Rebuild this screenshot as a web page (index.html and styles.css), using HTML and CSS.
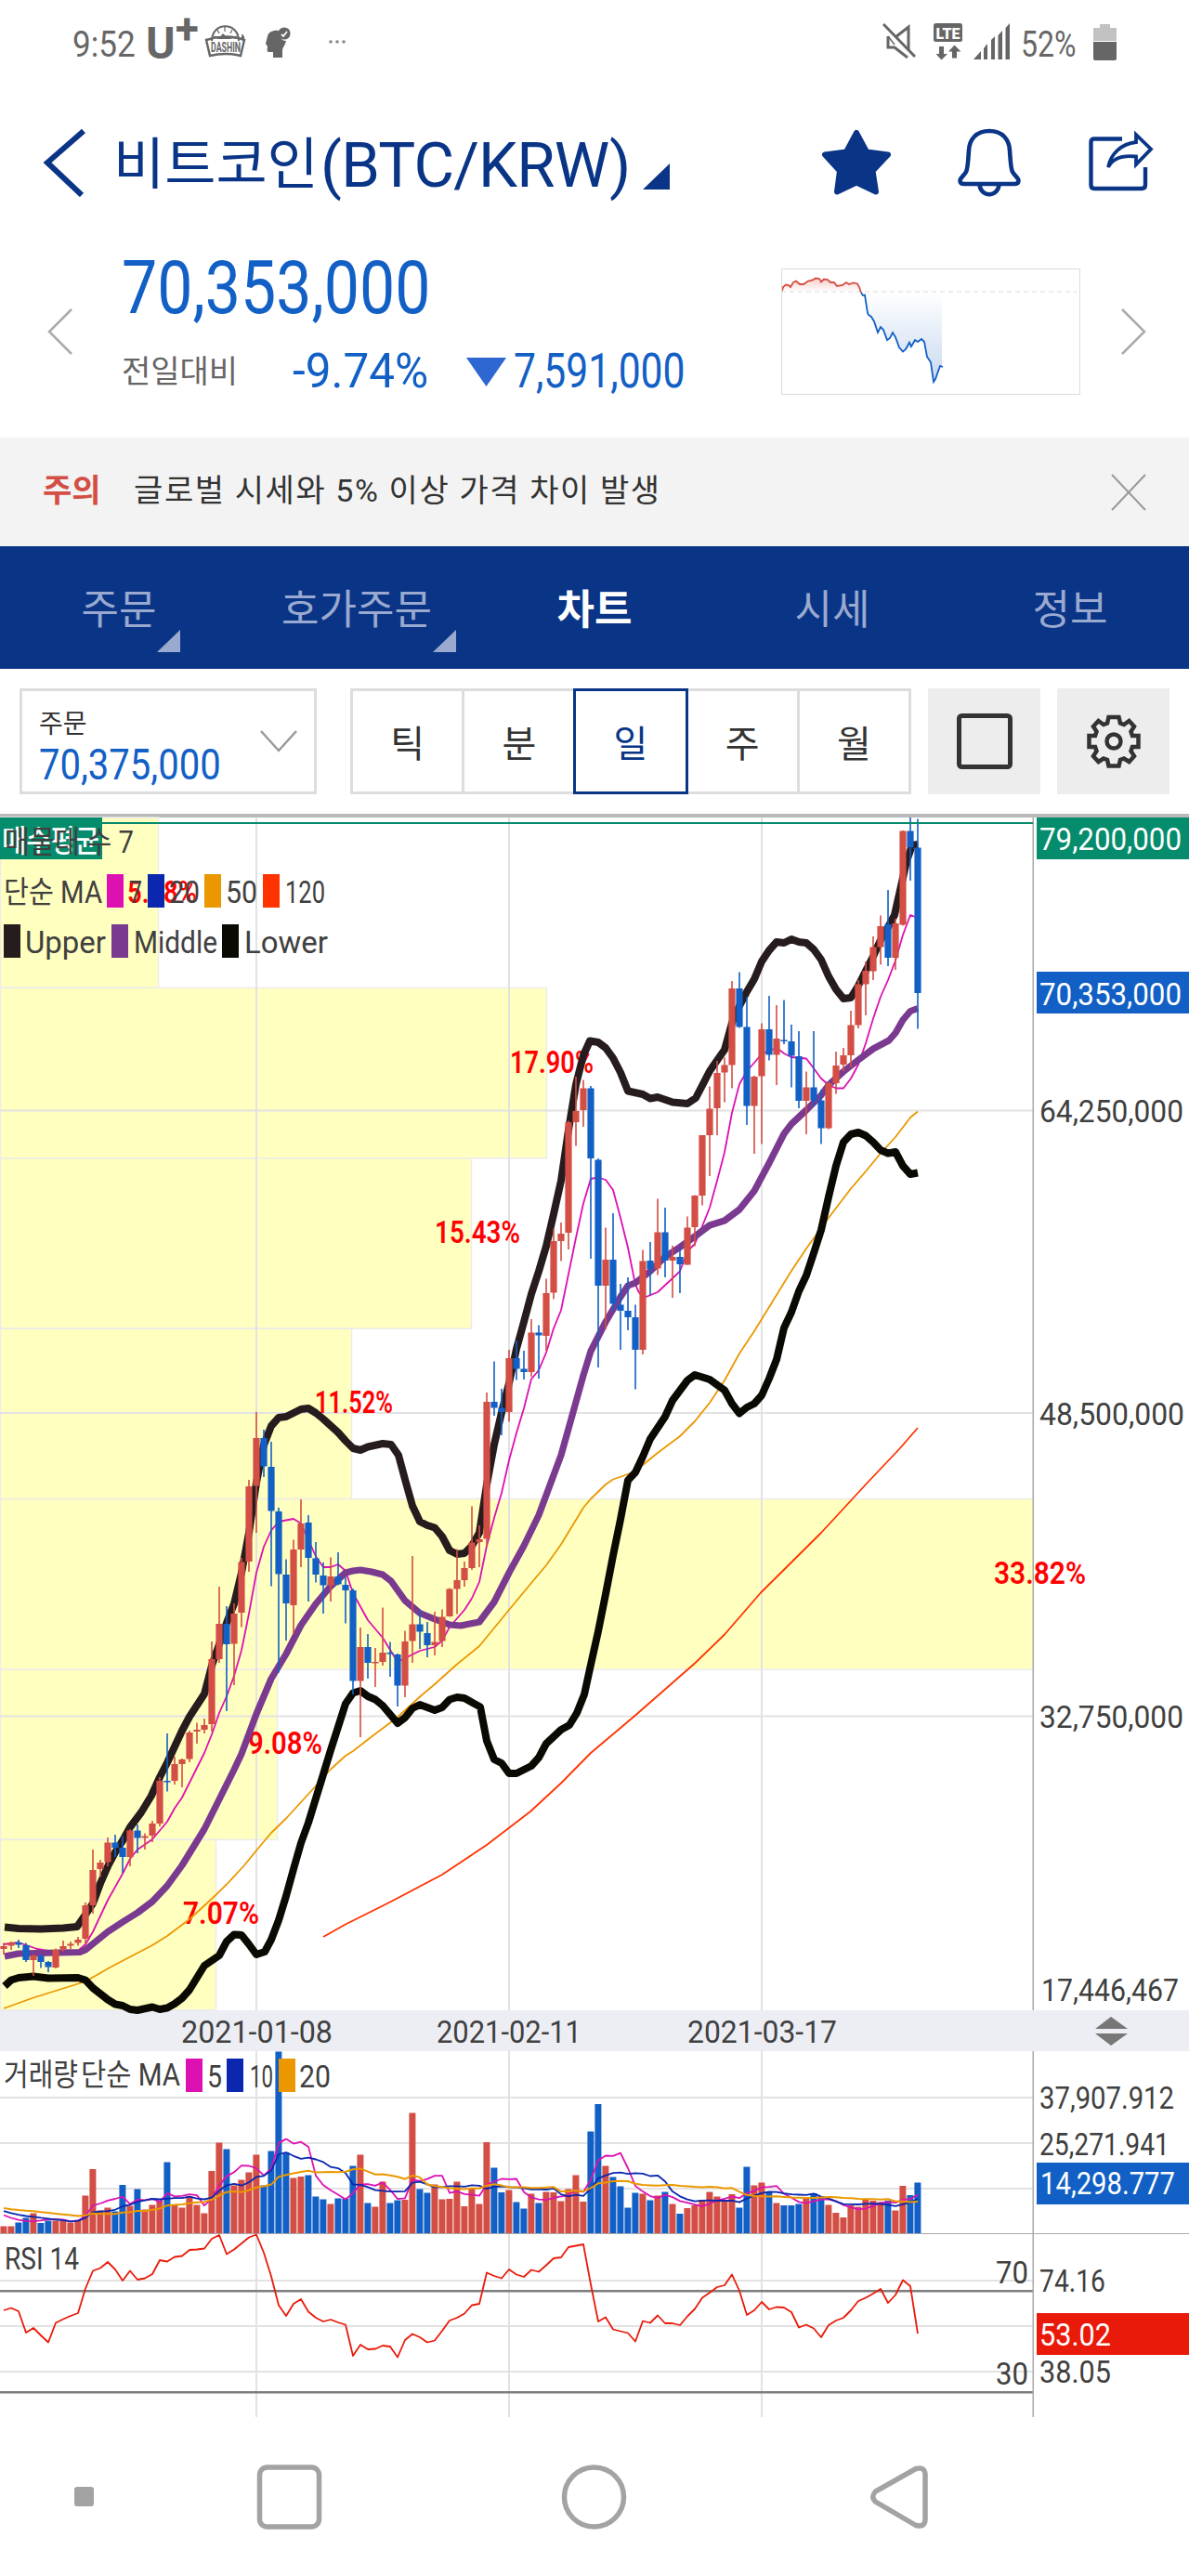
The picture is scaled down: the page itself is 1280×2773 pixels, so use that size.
FILE: index.html
```html
<!DOCTYPE html>
<html lang="ko">

<head>
  <meta charset="UTF-8">
  <title>비트코인(BTC/KRW)</title>
  <link rel="stylesheet" href="styles.css">
</head>

<body>
  <div class="status">
    <span class="clock"><span class="fit">9:52</span></span>
    <span class="carrier">U<sup>+</sup></span>
    <svg class="app-icon" width="44" height="36" viewBox="0 0 44 36" fill="none" stroke="#666">
      <path d="M7 17C7 -4 36 -4 36 17" stroke-width="2" />
      <path d="M21 2v5M13 5l2 4M29 5l-2 4M9 12l4 1M34 12l-4 1" stroke-width="1.2" />
      <path d="M11 15l5-2 3-4 4 4 7 2z" fill="#666" stroke="none" />
      <path d="M1 16Q22 9 42 16L38 33Q22 29 5 33Z" stroke-width="2.4" />
      <path d="M40 10l2 4-3 2z" fill="#666" />
      <text x="6" y="29" textLength="32" lengthAdjust="spacingAndGlyphs" class="dashin">DASHIN</text>
    </svg>
    <svg class="head-icon" width="27" height="34" viewBox="0 0 27 34">
      <path d="M2 10C3 5 9 3 14 4C13 10 17 15 22 15C21 20 18 22 18 26V33H8V27H3Q1 27 2 21L0 18Z" fill="#666" />
      <circle cx="20" cy="7" r="6.6" fill="#666" />
      <path d="M17 8l2 2 4-5" fill="none" stroke="#fff" stroke-width="1.8" />
    </svg>
    <svg class="dots" width="20" height="6" viewBox="0 0 20 6" fill="#888">
      <circle cx="3" cy="3" r="1.8" /><circle cx="10" cy="3" r="1.8" /><circle cx="17" cy="3" r="1.8" />
    </svg>
    <svg class="mute" width="38" height="38" viewBox="0 0 38 38" fill="none" stroke="#666" stroke-width="3">
      <path d="M1 1L35 36" />
      <path d="M14 15L28 4V29M6 14V26H13L27 37" />
      <path d="M6 14L13 23" stroke-width="1.5" />
    </svg>
    <svg class="lte" width="32" height="40" viewBox="0 0 32 40">
      <rect width="31" height="20" rx="2.5" fill="#666" />
      <text x="2.5" y="16.5" textLength="26" lengthAdjust="spacingAndGlyphs" class="lte-text">LTE</text>
      <path d="M6 25h5v8h4l-6.500 6.500L2.500 33H6zM20 37.500h5v-7h4.500L22.500 23.500 16 30.500h4z" fill="#666" />
    </svg>
    <svg class="signal" width="40" height="40" viewBox="0 0 40 40" fill="#666">
      <path d="M0 39L8 30V39ZM11 39V27L15 22V39ZM19 39V18L23 14V39ZM26.500 39V13L31 8V39ZM34.500 39V5L39 0V39Z" />
    </svg>
    <span class="percent"><span class="fit">52%</span></span>
    <svg class="battery" width="25" height="40" viewBox="0 0 25 40">
      <path d="M0 18V4H7V0H18V4H25V18Z" fill="#c2c2c2" />
      <path d="M0 19H25V37Q25 39 23 39H2Q0 39 0 37Z" fill="#666" />
    </svg>
  </div>

  <header class="title-bar">
    <svg class="back" width="48" height="74" viewBox="0 0 48 74" fill="none" stroke="#0a3587" stroke-width="6">
      <path d="M44 3L5 37L42 72" />
    </svg>
    <h1><span class="ko">비트코인</span><span class="pair">(BTC/KRW)</span></h1>
    <svg class="corner" width="29" height="28" viewBox="0 0 29 28"><path d="M0 28L29 0V28Z" fill="#0a3587" /></svg>
    <svg class="star" width="76" height="74" viewBox="0 0 76 74">
      <path d="M38 5L49 25.500L72 28.500L55.500 46L59 68.500L38 58.500L17 68.500L20 46L4 28.500L27 25.500Z" fill="#0a3587" stroke="#0a3587"
        stroke-width="6" stroke-linejoin="round" />
    </svg>
    <svg class="bell" width="68" height="74" viewBox="0 0 68 74" fill="none" stroke="#0a3587" stroke-width="4.600">
      <path d="M34 3C20 3 12.500 12 12 24C11 37 11 43 9 47C7 51 3 53 2.500 56C2.500 59 4 60 7 60H61C64 60 65.500 59 65.500 56C65 53 61 51 59 47C57 43 57 37 56 24C55.500 12 48 3 34 3Z" />
      <path d="M23.500 60C24 75 44 75 44.500 60" />
    </svg>
    <svg class="share" width="72" height="74" viewBox="0 0 72 74" fill="none" stroke="#0a3587" stroke-width="4.400">
      <path d="M37 11.500H7Q3.500 11.500 3.500 15V61Q3.500 65 7 65H58Q62 65 62 61V42" />
      <path d="M22 42C26 34 34 28.500 52 30.500V39L68 22.500L52 7V15C36 17 25 27 22 42Z" stroke-width="3.800" />
    </svg>
  </header>

  <section class="quote">
    <svg class="prev" width="28" height="50" viewBox="0 0 28 50" fill="none" stroke="#aaa" stroke-width="2.500"><path d="M26 1L2 25L26 49" /></svg>
    <div class="quote-main">
      <div class="price"><span class="fit">70,353,000</span></div>
      <div class="change">
        <span class="label">전일대비</span>
        <span class="rate"><span class="fit">-9.74%</span></span>
        <svg width="43" height="31" viewBox="0 0 43 31"><path d="M0 0H43L21.500 31Z" fill="#2e67d1" /></svg>
        <span class="diff"><span class="fit">7,591,000</span></span>
      </div>
    </div>
    <svg class="mini" width="322" height="136" viewBox="0 0 322 136" fill="none">
      <defs>
        <linearGradient id="down" x1="0" y1="0" x2="0" y2="1"><stop offset="0" stop-color="#fff" /><stop offset="1" stop-color="#c8d9ef" /></linearGradient>
        <linearGradient id="up" x1="0" y1="0" x2="0" y2="1"><stop offset="0" stop-color="#f6cdca" /><stop offset="1" stop-color="#fff" /></linearGradient>
      </defs>
      <path d="M1 24L2 20L5 17.500L10 20L16 13.500L24 17L29 13.500L37 10.500L43 14.500L46 11.500L53 15L57 15L60 19L70 15L82 16.500L86 25Z" fill="url(#up)" />
      <path d="M86 25H173V106L171 105L164 122L161 101L157 95L154 79L151 76L140 84L131 89.500L127 85L120 69L114 77L107 63L104 69L97 52L93 48L90 28Z" fill="url(#down)" />
      <path d="M0 25H318" stroke="#e6e6e6" stroke-width="1.500" stroke-dasharray="5 4" />
      <path d="M1 24L2 20L5 17.500L8 18L10 20L13 15L16 13.500L20 17L24 17L29 13.500L34 12.500L37 10.500L41 11L43 14.500L46 11.500L50 12L53 15L57 15L60 19L66 18L70 15L73 17L78 15.500L82 16.500L84 20L86 26" stroke="#d34e44" stroke-width="1.800" />
      <path d="M86 26L88 29L90 28.500L93 48L94 50L97 52L100 57L104 69L107 63L110 66L114 77L117 75L120 69L123 74L127 85L131 89.500L134 87L138 79.500L140 84L144 77L147 79L151 76L154 79L157 95L161 101L164 122L166 119L171 105L174 106" stroke="#1260c5" stroke-width="1.800" />
      <rect x=".5" y=".5" width="321" height="135" stroke="#dcdcdc" />
    </svg>
    <svg class="next" width="28" height="50" viewBox="0 0 28 50" fill="none" stroke="#aaa" stroke-width="2.500"><path d="M2 1L26 25L2 49" /></svg>
  </section>

  <div class="alert">
    <strong>주의</strong>
    <span class="alert-text">글로벌 시세와 5% 이상 가격 차이 발생</span>
    <svg width="38" height="40" viewBox="0 0 38 40" stroke="#999" stroke-width="2"><path d="M1 1L37 39M37 1L1 39" /></svg>
  </div>

  <nav class="tabs">
    <a class="tab has-menu">주문</a>
    <a class="tab has-menu wide">호가주문</a>
    <a class="tab active">차트</a>
    <a class="tab">시세</a>
    <a class="tab">정보</a>
  </nav>

  <div class="toolbar">
    <div class="order-box">
      <div>
        <div class="order-label">주문</div>
        <div class="order-price"><span class="fit">70,375,000</span></div>
      </div>
      <svg width="40" height="24" viewBox="0 0 40 24" fill="none" stroke="#999" stroke-width="2.500"><path d="M1 1L20 22L39 1" /></svg>
    </div>
    <div class="periods">
      <button>틱</button>
      <button>분</button>
      <button class="on">일</button>
      <button>주</button>
      <button>월</button>
    </div>
    <div class="tool">
      <svg width="60" height="60" viewBox="0 0 60 60"><rect x="2.500" y="2.500" width="55" height="55" rx="3" fill="none" stroke="#333" stroke-width="5" /></svg>
    </div>
    <div class="tool gear">
      <svg width="60" height="60" viewBox="0 0 60 60" fill="none" stroke="#333" stroke-width="4.500">
        <path d="M24.500 4H35.500L37 10.500L41 12L46.500 8L52 14L48.500 19.500L50 24H56.500V36H50L48.500 40.500L52 46L46.500 52L41 48.500L37 50L35.500 56.500H24.500L23 50L19 48.500L13.500 52L8 46L11.500 40.500L10 36H3.500V24H10L11.500 19.500L8 14L13.500 8L19 12L23 10.500Z" />
        <circle cx="30" cy="30" r="7.500" />
      </svg>
    </div>
  </div>

  <main class="charts">
    <svg id="price-chart" width="1280" height="1284" viewBox="0 0 1280 1284"></svg>
    <svg id="date-axis" width="1280" height="44" viewBox="0 0 1280 44"></svg>
    <svg id="volume-chart" width="1280" height="197" viewBox="0 0 1280 197"></svg>
    <svg id="rsi-chart" width="1280" height="197" viewBox="0 0 1280 197"></svg>
  </main>

  <footer class="system-nav">
    <svg width="1280" height="171" viewBox="0 0 1280 171" fill="none" stroke="#a3a3a3" stroke-width="5.500">
      <rect x="80" y="75" width="21" height="21" rx="3" fill="#a3a3a3" stroke="none" />
      <rect x="279.500" y="54" width="64" height="64" rx="8" />
      <circle cx="639.500" cy="86" r="32" />
      <path d="M986 55.500L942.500 80Q937 86 942.500 91L986 116.500Q996 119 996 110V61Q995 53 986 55.500Z" />
    </svg>
  </footer>

  <script src="chart.js"></script>
</body>

</html>
```

FILE: styles.css
```css
* {
  box-sizing: border-box;
}

body {
  margin: 0;
  width: 1280px;
  font-family: Roboto, "Noto Sans CJK KR", sans-serif;
  background: #fff;
  color: #333;
}

svg {
  display: block;
  flex: none;
}

.fit {
  display: inline-block;
  transform-origin: 0 50%;
  white-space: nowrap;
}

/* status bar */
.status {
  display: flex;
  height: 100px;
  padding: 0 78px 0 78px;
  color: #666;
}

.clock,
.percent {
  font-size: 39px;
  line-height: 96px;
  width: 79px;
}

.clock .fit {
  transform: scaleX(.9);
}

.carrier {
  width: 64px;
  font-size: 48px;
  font-weight: 700;
  line-height: 94px;
  white-space: nowrap;
}

.carrier sup {
  font-size: 46px;
  line-height: 0;
  vertical-align: 16px;
}

.app-icon {
  margin-top: 27px;
  overflow: visible;
}

.dashin {
  font: 700 15px Roboto, sans-serif;
  fill: #666;
  stroke: none;
}

.head-icon {
  margin: 29px 0 0 21px;
}

.dots {
  margin: 42px auto 0 40px;
}

.mute {
  margin-top: 25px;
}

.lte {
  margin: 25px 0 0 17px;
}

.lte-text {
  font: 900 17px Roboto, sans-serif;
  fill: #fff;
}

.signal {
  margin: 25px 0 0 11px;
}

.percent {
  width: 79px;
  margin-left: 11px;
}

.percent .fit {
  transform: scaleX(.82);
}

.battery {
  margin: 26px 0 0 -1px;
}

/* title */
.title-bar {
  display: flex;
  height: 150px;
  padding: 38px 37px 0 46px;
}

h1 {
  display: flex;
  width: 605px;
  margin: 0 0 0 28px;
  line-height: 80px;
  font-weight: 400;
  color: #0a3587;
  white-space: nowrap;
}

h1 .ko {
  width: 223px;
  font-size: 60px;
}

h1 .pair {
  font-size: 67px;
  letter-spacing: -.8px;
}

.corner {
  margin: 38px 0 0 -31px;
}

.star {
  margin-left: 163px;
}

.bell {
  margin-left: 71px;
}

.share {
  margin-left: 72px;
}

/* quote */
.quote {
  display: flex;
  height: 221px;
  padding-left: 51px;
}

.prev,
.next {
  margin-top: 82px;
}

.quote-main {
  width: 710px;
  padding: 20px 0 0 52px;
  color: #1260c5;
}

.price {
  font-size: 80px;
  line-height: 80px;
}

.price .fit {
  transform: scaleX(.85);
}

.change {
  display: flex;
  align-items: center;
  height: 62px;
  margin-top: 19px;
  font-size: 52px;
  line-height: 62px;
}

.label {
  width: 184px;
  font-size: 34px;
  color: #666;
}

.rate {
  width: 187px;
}

.rate .fit {
  transform: scaleX(.95);
}

.diff {
  padding-left: 8px;
}

.diff .fit {
  transform: scaleX(.82);
}

.mini {
  margin: 39px 0 0 52px;
}

.next {
  margin-left: 43px;
}

/* alert */
.alert {
  display: flex;
  align-items: center;
  height: 117px;
  padding: 0 46px;
  background: #f3f3f3;
  font-size: 34px;
}

.alert strong {
  width: 98px;
  color: #d34e44;
}

.alert-text {
  flex: 1;
  font-size: 34px;
  letter-spacing: 1.6px;
}

.alert strong,
.alert-text {
  line-height: 40px;
  margin-top: -3px;
}

/* tabs */
.tabs {
  display: flex;
  height: 132px;
  background: #0a3587;
}

.tab {
  position: relative;
  flex: 1;
  font-size: 44px;
  line-height: 139px;
  text-align: center;
  color: #9aa9cf;
}

.tab.active {
  font-weight: 700;
  color: #fff;
}

.has-menu::after {
  content: "";
  position: absolute;
  left: 169px;
  top: 90px;
  border-left: 25px solid transparent;
  border-bottom: 24px solid #9aa9cf;
}

.has-menu.wide::after {
  left: 210px;
}

/* toolbar */
.toolbar {
  display: flex;
  height: 160px;
  padding: 21px 0 0 21px;
  border-bottom: 4px solid #b9b9b9;
}

.order-box {
  display: flex;
  justify-content: space-between;
  width: 320px;
  height: 114px;
  padding: 18px 18px 0 18px;
  border: 3px solid #ddd;
}

.order-box svg {
  margin-top: 24px;
}

.order-label {
  font-size: 28px;
  line-height: 36px;
}

.order-price {
  width: 200px;
  font-size: 46px;
  line-height: 50px;
  color: #1260c5;
}

.order-price .fit {
  transform: scaleX(.87);
}

.periods {
  display: flex;
  width: 604px;
  height: 114px;
  margin-left: 36px;
  border: 3px solid #ddd;
}

.periods button {
  flex: 1;
  padding: 0;
  border: 0;
  border-right: 3px solid #ddd;
  background: #fff;
  font: 400 40px Roboto, "Noto Sans CJK KR", sans-serif;
  color: #333;
}

.periods button:last-child {
  border-right: 0;
}

.periods .on {
  margin: -3px 0 -3px -3px;
  border: 3px solid #0a3587;
  color: #0a3587;
}

.tool {
  display: flex;
  align-items: center;
  justify-content: center;
  width: 121px;
  height: 114px;
  margin-left: 18px;
  background: #ededed;
}

.gear {
  margin-left: 18px;
}

/* charts */
.charts {
  font-size: 33px;
}

.charts svg {
  position: relative;
  overflow: visible;
}

#date-axis {
  z-index: 0;
}

#price-chart {
  z-index: 1;
}

.system-nav {
  height: 171px;
}
```

FILE: chart.js
```js
const NS = 'http://www.w3.org/2000/svg';
const STEP = 8;
const RED = '#d34e44';
const BLUE = '#1260c5';
const AXIS_X = 1112;

// [color, body top, body bottom, high, low]
const candles = [
  ['R',1215,1218,1211.5,1224],['R',1211,1214.5,1210,1219],['B',1211,1213.5,1208,1217],['B',1214,1230,1211.5,1232],
  ['R',1225,1230,1224,1247],['B',1225.5,1232,1224,1238.5],['B',1232,1237.5,1231,1243],['R',1219,1238,1217.5,1239],
  ['R',1215,1218.5,1209,1221],['R',1212.5,1214.5,1210,1218],['R',1208,1211.5,1205,1214.5],['R',1171,1207,1168,1213],
  ['R',1133,1171,1111,1180],['R',1125,1132,1122,1140.5],['R',1103.5,1124.5,1098,1129],['B',1103.5,1109,1095,1119],
  ['B',1109,1119,1096.5,1136],['R',1090.5,1119,1089,1129],['B',1090.5,1098.5,1084,1115],['R',1096.5,1098.5,1093.5,1111],
  ['R',1083,1096,1080,1103],['R',1037,1083,1033,1086],['B',1037,1038,986,1048.5],['R',1019,1037,1011,1041],
  ['R',1014,1019,1013,1044],['R',985,1013.5,983,1017],['R',982,984,974.5,997],['R',977,982,970,986],
  ['R',906,976,887,984],['R',868,906,828,910],['B',868,890,849,962],['R',857,889.5,846,934],
  ['R',801.5,856,797,871.5],['R',720,801,713,812],['R',668,719.5,640,770],['B',668,698.5,659,710],
  ['B',699,746.5,672,827.5],['B',747,814.5,743,920.5],['B',815,846,798.5,886],['R',788,848,777.5,879],
  ['R',760,788,734,807],['B',759,797,751,844],['B',797.5,815,780,823.5],['B',816,826.5,802,857],
  ['R',817,826.5,796.5,844],['B',817,825.5,791,826.5],['B',826,832,817.5,867.5],['B',832,929.5,830,944],
  ['R',893,929.5,872,990],['B',893,910,879,927],['R',909,910,894,936],['R',899,909,850.5,913],
  ['B',899,900.5,887.5,925],['B',901,934.5,900,957],['R',887,934.5,875.5,947],['R',868.5,886.5,795,910],
  ['B',868.5,876.5,853.5,895],['B',878,891,866,904],['R',887.5,891,855,902],['R',860.5,886.5,852.5,893],
  ['R',830.5,860,829.5,860.5],['R',821,830.5,787.5,857.5],['R',808,821,801,828],['R',780.5,808,741.5,810],
  ['R',777,780,762,807],['R',629,776.5,619,785],['B',629,635.5,585.5,644],['B',635.5,640,615,665],
  ['R',582,640,573,650.5],['B',582,593.5,563,605.5],['B',593.5,597,574,605],['R',554.5,597,540,602],
  ['B',554.5,557.5,546.5,604],['R',512,558,496.5,574],['R',456,511.5,442.5,518.5],['R',448,456,436,477.5],
  ['R',328,447,326.5,465],['R',316,328,279,353.5],['R',291.5,315,282.5,333],['B',291.5,367,289,475],
  ['B',368.5,504,367,592],['R',476,504,441.5,551],['B',476,523.5,426,531.5],['B',524.5,531,502,573],
  ['B',531,538,495,552],['B',538,573,524.5,615.5],['R',477.5,573,465.5,578],['B',477,486,457,514.5],
  ['R',446.5,485.5,410.5,492.5],['B',446.5,477,420,495],['R',473,477,461,517],['B',473,481,464,512],
  ['R',441.5,481.5,429.5,481.5],['R',407,441,406.5,461.5],['R',342,407,342,417.5],['R',313.5,342,289.5,386],
  ['R',275,313,262,342],['R',266.5,274.5,258.5,306.5],['R',184,266.5,176,291.5],['B',184,225.5,166.5,226.5],
  ['B',225.5,310.5,193.5,331],['R',279,310.5,278,362],['R',228,278.5,221.5,351.5],['B',228,255.5,192,261.5],
  ['R',238,255.5,202,288],['B',239.5,241,196.5,244],['B',241,256.5,223,290.5],['B',257,305,230,313],
  ['R',290.5,305,273.5,341],['B',290.5,304.5,230,311],['B',304.5,334.5,293,351.5],['R',286,334.5,285,335.5],
  ['R',267,286,252,297.5],['R',256,266,248,273.5],['R',223.5,256,208,269.5],['R',179.5,223.5,175,227],
  ['R',165,179.5,155,213],['R',139.5,165.5,128,175],['R',117,139.5,105.5,158.5],['B',115,151,78,160],
  ['R',114,151,109,164],['R',14.5,115.5,14,116.5],['B',14.5,32,0,68],['B',32.5,189,1.5,227.5]
];

const volumes = [
  8,8,12,17,22,11.5,14,14,14,12, 15,41,69.5,25,28,24,52.5,30,48,26,
  31,36,77,31,28,40,31,22,67.5,98, 91,52,58,66,85,52,89,196,87.5,60,
  61.5,63,40,37,32,38,38,73,85,33, 29,56,33,36,36.5,130,48,44,53,37,
  37.5,56,29.5,49,32,98.5,71,44.5,47,34, 27,43,33,45,44.5,35,48,63,34.5,110,
  139.5,73,61,51,28,44,43,36,41,45, 32,21.5,27.5,30.5,36.5,45,40,36,42.5,28,
  72,52,55,44.5,33,30.5,30.5,32,38.5,43.5, 40,31,22.5,17.5,30.5,29,36.5,35.5,34,35.5,
  25,51.5,41.5,55
];

const rsi = [
  82,79.5,83,106,101,109,116.5,95.5,91.5,88, 85,58.5,39.5,36.5,30,38,50,39.5,49,47.5,
  43,28,29.5,24.5,23.5,17,16.5,15.5,5,1, 21.5,16.5,10,3.5,.5,20,45.5,76.5,88,75,
  70,83.5,90,94,92,95,97.5,131,119,124, 123.5,120,121,132.5,114,107.5,111,116.5,114.5,104,
  93,90,85.5,76.5,75,41.5,45,47.5,38,43.5, 46,38.5,40.5,33.5,26,25,14,12.5,11,54,
  94,89.5,102.5,104.5,106.5,115.5,93.5,95.5,87.5,96, 96,98,88.5,80.5,68.5,63,57,55,43.5,61,
  87,82,73,81,78.5,79,84,100.5,97.5,101.5, 111,98,93,90,82,72,68.5,64,59,74,
  65.5,49.5,56,107
];

const ma120 = '348,1205 372,1191.5 420,1167.5 476,1138 524,1106 571,1070 604,1039.5 636,1007 684,966.5 748,910.5 780,879.5 819,834.5 884,770 932,718 968,680 988,657';
const ma50 = '4,1282 36,1270.5 60,1263 92,1253 120,1237 164,1214 180,1204 204,1186 228,1164 244,1148.5 263,1128 276,1112 292,1093 308,1077.5 324,1060 340,1042.5 356,1024.5 372,1010 380,1005 400,989.5 428,968.5 452,946.5 468,933 492,911.5 516,892 548,853 572,824 588,805 604,782.5 628,743 636,733.5 652,718 660,712.5 680,705.5 692,697 708,684 732,666 748,650 764,630 780,606 796,577 812,553 828,527 852,488 868,464 892,431 916,399.5 932,381 948,361.5 964,344 980,323 988,316.5';
const ma7 = '4,1213 20,1211 40,1218 60,1221.5 84,1220 92,1213 100,1199.5 116,1165.5 132,1137 140,1121 148,1111 164,1100 180,1081 188,1066.5 196,1055 220,1007 228,987 236,964 244,946 252,924 260,896.5 268,857 276,813 284,785 292,767.5 300,758 316,755 324,760 332,777.5 340,795.5 348,807 356,807 364,804 372,811 380,835 396,864 412,883 428,909 436,905 452,897 468,893 476,886 484,871.5 500,853 508,840.5 516,823 524,784 532,754 540,727 548,692 556,662.5 564,636 572,604.5 580,595 588,576 596,550 604,530.5 612,491.5 620,452.5 628,415.5 636,389 644,387.5 652,390 660,401 668,431 676,463 684,503 688,511.5 693,517 708,511 724,496 732,488.5 740,467 748,459 756,440 764,420 772,391 780,360.5 788,318 796,287 804,273 812,264 820,254.5 836,248 844,254 852,258 868,259.5 876,270 884,281 892,288 900,291.5 908,291.5 916,281 924,266 932,243 940,216.5 948,193 956,175 964,154 972,126.5 980,105 988,108';
const upper = '5,1194.5 20,1196 44,1196.5 68,1195.5 83,1194 92,1181 100,1169 108,1147.5 117,1127 124,1114 132,1101.5 140,1087 152,1071 163,1053 172,1033 180,1017.5 196,983 204,968 220,943.5 228,913 236,890 244,867 252,846.5 260,813 268,770 276,716 284,675.5 292,655 300,646 308,645 324,637 332,636 340,641 348,647.5 364,662 372,671 380,679 388,681 396,677.5 412,674 421,675 429,686.5 436,712.5 444,741 452,758 460,762 468,764.5 476,774 484,789 492,793 500,792 508,784 516,770 524,718 532,675 540,640.5 548,609 556,572 564,543 572,513 580,488.5 588,461.5 596,427 604,391 612,336.5 620,287.5 628,256 635,240.5 644,242 652,248 660,259 668,274.5 676,294.5 692,298 700,302.5 708,301 724,306.5 740,308 749,302 764,273 780,250 788,221 796,203 804,187.5 812,174 820,155 828,143 836,134 844,135 852,131 860,134 868,135 876,142 884,153 892,171 900,185 908,195 916,194 924,181 932,165 940,149.5 948,132 956,118 963,105 970,74 976,47 982,30 988,29';
const middle = '5,1226 20,1223 40,1222.5 86,1221.5 92,1219 116,1199.5 132,1189 148,1179 164,1167 180,1150 196,1128 220,1089 236,1057 252,1025 260,1008 276,965 292,927 308,900.5 324,869.5 340,846.5 356,827.5 372,813 380,811 388,810 400,812 412,815 421,822 436,843 452,856.5 468,863 484,869 496,870 516,866 532,844.5 548,813 564,784 580,751 604,686.5 612,658 628,600.5 636,574.5 652,543 668,516 676,504 684,501 700,488.5 716,473 732,462.5 748,451 764,439 780,434 796,422 812,402 828,372 844,340.5 852,330 868,315 884,299 892,288 908,273.5 924,261 940,249 957,240 964,232 972,218 980,208.5 988,205.5';
const lower = '5,1258 12,1251.5 20,1249 36,1247.5 52,1249.5 84,1249 92,1251.5 100,1260 116,1272.5 124,1277.5 132,1279 140,1283 148,1284 164,1280.5 172,1283 180,1281.5 188,1277 196,1271 204,1262 220,1236 236,1225 244,1210 252,1202.5 260,1203 268,1213 276,1224 285,1221 292,1208 300,1187 308,1161 316,1132 324,1104 332,1082 340,1056 356,1004 364,979 372,954 380,942.5 388,940 396,946 404,949.5 412,956 428,975 436,969 444,959 452,955 468,961 476,958 484,949.5 492,947 500,948 517,957.5 524,994 532,1014 540,1018 548,1029 556,1029 572,1021 580,1012 588,997 604,982 613,977 621,964 629,944 636,912 644,876 652,836 660,794.5 668,755.5 676,713.5 684,705 692,688 700,669 716,645 724,627.5 740,606 748,600 764,605 780,616.5 788,631 796,641.5 804,635 812,631 820,622 828,604 836,583.5 844,549.5 852,532.5 860,510 868,493 876,469 884,444 892,408.5 900,375 908,349.5 916,341 924,339 932,342.5 940,349.5 948,358 956,361.5 964,360 972,375 980,384 988,382.5';

function add(svg, name, attrs) {
  const el = document.createElementNS(NS, name);
  for (const key in attrs) el.setAttribute(key, attrs[key]);
  svg.appendChild(el);
  return el;
}

function rect(svg, x, y, width, height, fill) {
  return add(svg, 'rect', { x, y, width, height, fill });
}

function curve(svg, points, stroke, width) {
  add(svg, 'polyline', { points, fill: 'none', stroke, 'stroke-width': width, 'stroke-linejoin': 'round' });
}

function label(svg, text, x, y, width, fill = '#404040', weight = 400) {
  const el = add(svg, 'text', { x, y, fill, 'font-weight': weight, textLength: width, lengthAdjust: 'spacingAndGlyphs' });
  el.textContent = text;
}

function grid(svg, height, rows) {
  [276, 548, 820].forEach(x => rect(svg, x - 1, 0, 2, height, '#e2e2e2'));
  rows.forEach(y => rect(svg, 0, y - 1, AXIS_X, 2, '#e2e2e2'));
}

function legend(svg, items, y, height) {
  items.forEach(([color, x, text, tx, width]) => {
    rect(svg, x, y, 18, height, color);
    label(svg, text, tx, y + height - 5, width);
  });
}

function drawPrice() {
  const svg = document.getElementById('price-chart');
  // volume profile, top to bottom
  const profile = [
    [170, '5.18%', 137, 75], [588, '17.90%', 549, 90], [507, '15.43%', 468, 92], [378, '11.52%', 339, 84],
    [AXIS_X, '33.82%', 1070, 99], [298, '9.08%', 267, 80], [232, '7.07%', 197, 82]
  ];
  profile.forEach(([width], i) => {
    const el = rect(svg, .5, i * 183.4, width, 183.4, '#ffffbf');
    el.setAttribute('stroke', '#ececec');
    el.setAttribute('stroke-width', 1.5);
  });
  grid(svg, 1284, [315.5, 641, 967.5]);
  profile.forEach(([, text, x, width], i) => label(svg, text, x, 91.5 + i * 183.3, width, '#f00', 600));
  rect(svg, AXIS_X - .5, 0, 1.5, 1284, '#aaa');

  curve(svg, upper, '#271c1d', 8);
  curve(svg, ma50, '#eb9800', 1.8);
  curve(svg, ma120, '#ff3300', 1.8);
  curve(svg, ma7, '#dd11b2', 1.8);
  curve(svg, middle, '#7a3a90', 7.2);
  curve(svg, lower, '#0a0a02', 8);

  candles.forEach(([type, top, bottom, high, low], i) => {
    const fill = type === 'R' ? RED : BLUE;
    rect(svg, i * STEP + 3.2, high, 1.6, low - high, fill);
    rect(svg, i * STEP + .4, top, 7.2, Math.max(bottom - top, 1.5), fill);
  });

  rect(svg, 0, 5, AXIS_X, 2, '#058c6c');
  rect(svg, 0, 0, 110, 45, '#058c6c');
  label(svg, '매수평균', 2, 37, 105, '#fff', 500);
  label(svg, '매물대 수 7', 5, 38, 139);
  label(svg, '단순 MA', 4, 92, 106);
  legend(svg, [['#dd11b2', 115, '7', 139, 14], ['#0a27ae', 159, '20', 182, 33], ['#eb9800', 220, '50', 243, 34], ['#ff3300', 283, '120', 307, 43]], 61, 36);
  legend(svg, [['#271c1d', 4, 'Upper', 27, 87], ['#7a3a90', 120, 'Middle', 144, 90], ['#0a0a02', 239, 'Lower', 263, 90]], 115, 36);

  label(svg, '64,250,000', 1119, 328, 155);
  label(svg, '48,500,000', 1119, 654, 156);
  label(svg, '32,750,000', 1119, 980, 155);
  label(svg, '17,446,467', 1121, 1274, 148);
  rect(svg, 1116, 0, 164, 45, '#058c6c');
  label(svg, '79,200,000', 1119, 35, 153, '#fff');
  rect(svg, 1116, 166, 164, 45, BLUE);
  label(svg, '70,353,000', 1119, 202, 153, '#fff');
}

function drawDates() {
  const svg = document.getElementById('date-axis');
  rect(svg, 0, 0, 1280, 44, '#edeef4');
  label(svg, '2021-01-08', 195, 35, 163);
  label(svg, '2021-02-11', 470, 35, 156);
  label(svg, '2021-03-17', 740, 35, 161);
  add(svg, 'path', { d: 'M1179 20L1196 7L1214 20ZM1179 25H1214L1196 38Z', fill: '#777' });
}

function average(data, n) {
  // bars that precede the first one on screen
  const before = [...Array(10).fill(30.6), ...Array(5).fill(30), ...Array(5).fill(23)];
  const all = before.concat(data);
  return data.map((_, i) => {
    const end = i + before.length + 1;
    const sum = all.slice(end - n, end).reduce((a, b) => a + b, 0);
    return `${i * STEP + 4},${(196.5 - sum / n).toFixed(1)}`;
  }).join(' ');
}

function drawVolume() {
  const svg = document.getElementById('volume-chart');
  grid(svg, 197, [50, 99, 148]);
  rect(svg, AXIS_X - .5, 0, 1.5, 197, '#aaa');
  volumes.forEach((v, i) => rect(svg, i * STEP + .4, 196.5 - v, 7, v, candles[i][0] === 'R' ? RED : BLUE));
  rect(svg, 0, 196, 1280, 1, '#aaa');
  curve(svg, average(volumes, 5), '#dd11b2', 1.8);
  curve(svg, average(volumes, 10), '#0a27ae', 1.8);
  curve(svg, average(volumes, 20), '#eb9800', 2);
  label(svg, '거래량', 4, 37, 80);
  label(svg, '단순 MA', 87, 37, 107);
  legend(svg, [['#dd11b2', 200, '5', 223, 16], ['#0a27ae', 244, '10', 269, 25], ['#eb9800', 300, '20', 322, 34]], 8, 36);
  label(svg, '37,907.912', 1119, 62, 145);
  label(svg, '25,271.941', 1119, 112, 140);
  rect(svg, 1116, 120, 164, 45, BLUE);
  label(svg, '14,298.777', 1120, 154, 145, '#fff');
}

function drawRsi() {
  const svg = document.getElementById('rsi-chart');
  grid(svg, 197, [50, 99, 148]);
  rect(svg, 0, 60, AXIS_X, 2.5, '#7d7d7d');
  rect(svg, 0, 169, AXIS_X, 2.5, '#7d7d7d');
  rect(svg, AXIS_X - .5, 0, 1.5, 197, '#aaa');
  curve(svg, rsi.map((y, i) => `${i * STEP + 4},${y}`).join(' '), '#ea1a0a', 1.8);
  label(svg, 'RSI 14', 5, 38, 80);
  label(svg, '70', 1072, 53, 35);
  label(svg, '30', 1072, 162, 35);
  label(svg, '74.16', 1119, 62, 71);
  rect(svg, 1116, 85, 164, 45, '#ea1a0a');
  label(svg, '53.02', 1119, 120, 77, '#fff');
  label(svg, '38.05', 1119, 160, 77);
}

drawPrice();
drawDates();
drawVolume();
drawRsi();
```
